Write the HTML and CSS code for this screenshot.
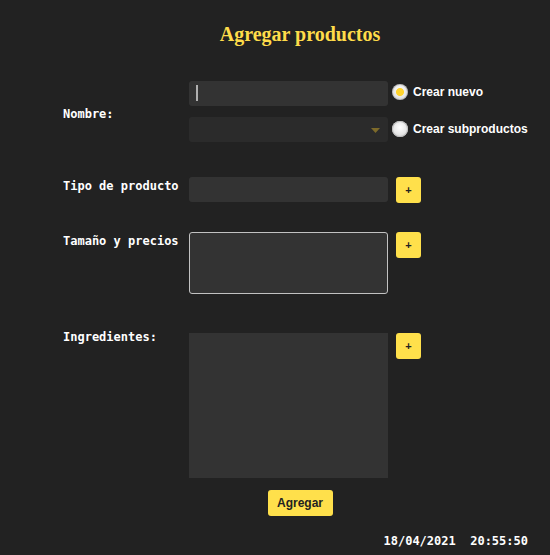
FILE: index.html
```html
<!DOCTYPE html>
<html lang="es">
<head>
<meta charset="utf-8">
<title>Agregar productos</title>
<link rel="stylesheet" href="styles.css">
</head>
<body>
<main class="page">
  <h1 class="title">Agregar productos</h1>

  <section class="row row-nombre">
    <label class="label label-nombre">Nombre:</label>
    <div class="field-stack">
      <div class="input"><span class="caret"></span></div>
      <div class="select">
        <svg class="arrow" width="9" height="5" viewBox="0 0 9 5"><path d="M0 0H9L4.5 5Z" fill="#7d6a2a"/></svg>
      </div>
    </div>
    <div class="radios">
      <label class="radio-item"><input class="radio" type="radio" name="modo" checked><span>Crear nuevo</span></label>
      <label class="radio-item"><input class="radio" type="radio" name="modo"><span>Crear subproductos</span></label>
    </div>
  </section>

  <section class="row row-tipo">
    <label class="label label-top">Tipo de producto</label>
    <div class="input"></div>
    <button class="plus" type="button">+</button>
  </section>

  <section class="row row-tamano">
    <label class="label label-top">Tamaño y precios</label>
    <div class="textarea"></div>
    <button class="plus" type="button">+</button>
  </section>

  <section class="row row-ingredientes">
    <label class="label label-ing">Ingredientes:</label>
    <div class="list-box"></div>
    <button class="plus" type="button">+</button>
  </section>

  <div class="actions">
    <button class="submit" type="button">Agregar</button>
  </div>

  <div class="datetime">18/04/2021&nbsp;&nbsp;20:55:50</div>
</main>
</body>
</html>
```

FILE: styles.css
```css
html, body {
  margin: 0;
  padding: 0;
}
body {
  background: #222222;
  width: 550px;
  height: 555px;
  overflow: hidden;
  color: #ffffff;
}
.page {
  padding: 22px 0 0 63px;
}
.title {
  margin: 0 0 35px 0;
  width: 474px;
  text-align: center;
  font: bold 20px/24px "Liberation Serif", "Times New Roman", serif;
  color: #ffdc4a;
}
.row {
  display: grid;
  grid-template-columns: 118px 199px auto;
  column-gap: 8px;
  align-items: start;
}
.label {
  font: bold 12px/14px "DejaVu Sans Mono", "Liberation Mono", monospace;
  color: #ffffff;
  white-space: nowrap;
}
.label-nombre {
  margin-top: 26px;
}
.label-top {
  margin-top: 2px;
}
.label-ing {
  margin-top: -3px;
}
.row-nombre {
  margin-bottom: 35px;
}
.field-stack {
  display: flex;
  flex-direction: column;
  gap: 11px;
}
.input {
  height: 25px;
  background: #333333;
  border-radius: 3px;
  box-sizing: border-box;
  padding: 4px 0 0 7px;
}
.caret {
  display: block;
  width: 2px;
  height: 16px;
  background: #b0b0b0;
}
.select {
  height: 25px;
  background: #2b2b2b;
  border-radius: 3px;
  display: flex;
  align-items: center;
  justify-content: flex-end;
  padding-right: 8px;
}
.arrow {
  display: block;
  margin-top: 1px;
}
.radios {
  margin-left: -4px;
  padding-top: 3px;
  display: flex;
  flex-direction: column;
  gap: 21px;
}
.radio-item {
  display: flex;
  align-items: center;
  gap: 5px;
  height: 16px;
  font: bold 12px/16px "Liberation Sans", Arial, sans-serif;
  color: #ffffff;
  white-space: nowrap;
}
.radio {
  appearance: none;
  -webkit-appearance: none;
  margin: 0;
  width: 16px;
  height: 16px;
  border-radius: 50%;
  background: radial-gradient(circle at 50% 40%, #ffffff 0, #e6e6e6 55%, #c4c4c4 100%);
  box-shadow: inset 0 0 0 1px #bdbdbd;
}
.radio:checked {
  background:
    radial-gradient(circle, #ffd42e 0, #ffd42e 3.6px, rgba(255, 212, 46, 0) 4.4px),
    radial-gradient(circle at 50% 40%, #ffffff 0, #e6e6e6 55%, #c4c4c4 100%);
}
.row-tipo {
  margin-bottom: 29px;
}
.plus {
  width: 25px;
  height: 26px;
  padding: 0;
  border: none;
  border-radius: 3px;
  background: #ffe04b;
  color: #222222;
  font: bold 11px/26px "Liberation Sans", Arial, sans-serif;
}
.row-tamano {
  margin-bottom: 39px;
}
.textarea {
  height: 62px;
  box-sizing: border-box;
  background: #333333;
  border: 1px solid #c2c2c2;
  border-radius: 3px;
}
.list-box {
  height: 145px;
  background: #333333;
}
.actions {
  width: 474px;
  margin-top: 12px;
  display: flex;
  justify-content: center;
}
.submit {
  width: 65px;
  height: 26px;
  padding: 0;
  border: none;
  border-radius: 3px;
  background: #ffe04b;
  color: #222222;
  font: bold 12px/26px "Liberation Sans", Arial, sans-serif;
}
.datetime {
  margin-top: 18px;
  padding-right: 22px;
  text-align: right;
  font: bold 12px/14px "DejaVu Sans Mono", "Liberation Mono", monospace;
  color: #ffffff;
}
```
